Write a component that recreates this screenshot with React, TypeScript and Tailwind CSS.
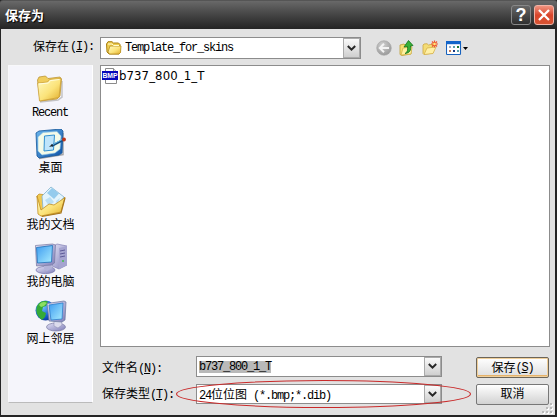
import React from "react";

const song = "font-['Liberation_Mono','Noto_Sans_CJK_SC',monospace]";

function Cn({ children }: { children: React.ReactNode }) {
  return <span className="font-['Noto_Sans_CJK_SC',sans-serif] text-[12px] tracking-normal">{children}</span>;
}

function Mono({ children }: { children: React.ReactNode }) {
  return <span className={`${song} whitespace-pre text-[12px] tracking-[-1.2px]`}>{children}</span>;
}

function Key({ k }: { k: string }) {
  return (
    <span className={`${song} whitespace-pre text-[12px] tracking-[-1.2px]`}>
      (<span className="underline underline-offset-1">{k}</span>)
    </span>
  );
}

function Defs() {
  return (
    <svg width="0" height="0" className="absolute">
      <defs>
        <linearGradient id="yellow" x1="0" y1="0" x2="1" y2="1">
          <stop offset="0" stopColor="#fffbc4" />
          <stop offset="0.55" stopColor="#fbe37a" />
          <stop offset="1" stopColor="#e0ab28" />
        </linearGradient>
        <linearGradient id="screen" x1="0" y1="0" x2="1" y2="1">
          <stop offset="0" stopColor="#3d9bf0" />
          <stop offset="1" stopColor="#a9edff" />
        </linearGradient>
        <linearGradient id="blue" x1="0" y1="0" x2="1" y2="1">
          <stop offset="0" stopColor="#6db8ee" />
          <stop offset="1" stopColor="#0b4fa5" />
        </linearGradient>
        <linearGradient id="lilac" x1="0" y1="0" x2="1" y2="1">
          <stop offset="0" stopColor="#e3e2f6" />
          <stop offset="1" stopColor="#7e7db8" />
        </linearGradient>
        <radialGradient id="globe" cx="0.35" cy="0.3" r="0.8">
          <stop offset="0" stopColor="#79c9ff" />
          <stop offset="0.6" stopColor="#1a63d6" />
          <stop offset="1" stopColor="#092f8c" />
        </radialGradient>
        <radialGradient id="grey" cx="0.4" cy="0.3" r="0.8">
          <stop offset="0" stopColor="#d0d0d0" />
          <stop offset="1" stopColor="#949494" />
        </radialGradient>
      </defs>
    </svg>
  );
}

function RecentIcon() {
  return (
    <svg width="32" height="32" viewBox="1 0 32 32">
      <path d="M6 30l18-2 4-3V9" fill="none" stroke="#777" strokeWidth="1.5" opacity="0.4" />
      <path d="M3.5 8l1.5-3 6.5-1 2.5 2.5 12-1.5 1.5 2-1.5 17-3 3-17 2z" fill="#f0cd5c" stroke="#b58b28" strokeWidth="0.7" />
      <path d="M3.5 11l10-1 2-2.5 11.5-1-2 19-19.5 3.5z" fill="url(#yellow)" stroke="#c89b33" strokeWidth="0.7" />
      <path d="M5 12l9.5-1 2-2.5 9-1" fill="none" stroke="#fffde0" />
    </svg>
  );
}

function DesktopIcon() {
  return (
    <svg width="32" height="32" viewBox="0 0 32 32">
      <path d="M4 29.5l24-4V4" fill="none" stroke="#555" opacity="0.5" strokeWidth="1.5" />
      <path d="M1 4l3-2 22-2 2 2-1 22-3 2-20 3-2-2z" fill="url(#blue)" stroke="#14579b" strokeWidth="0.8" />
      <path d="M3 8l5-4.5 14-1 4 4.5-1 13-5 4-13 2-4-4z" fill="#f4fbe9" stroke="#8fc4e6" strokeWidth="0.6" />
      <path d="M9.5 7l10-1-1 15-9.5 1z" fill="#bfe5fb" stroke="#3390d0" />
      <path d="M16.5 17l11.5-6" stroke="#155083" strokeWidth="2.4" />
      <path d="M18 15.5l9-5" stroke="#65b9e9" strokeWidth="1" />
      <path d="M14 18l3-3 1 2z" fill="#222" />
      <circle cx="29" cy="10.5" r="1.9" fill="#bd351a" />
    </svg>
  );
}

function DocsIcon() {
  return (
    <svg width="32" height="32" viewBox="0 0 32 32">
      <path d="M2 10l2-2 7 1 14 2v16l-19 3z" fill="#f1c84f" stroke="#bd8d23" strokeWidth="0.7" />
      <path d="M7 10l9-9 13 10-12 15-9-3z" fill="#e4f4fc" stroke="#82b2ce" strokeWidth="0.8" />
      <path d="M12 7l5-5 7 5.5-5 5.5z" fill="#94cbed" />
      <path d="M10 14l5-3 4 5-5 4zM21 15l4-3-3 7z" fill="#b9dff4" />
      <path d="M2 10l4 14 8-6 5 1 9-6 2-2-4 15-20 4-3-2z" fill="url(#yellow)" stroke="#c18f23" strokeWidth="0.8" />
      <path d="M7 30.5l19-3.5 4-15" fill="none" stroke="#a8781f" strokeWidth="1.2" />
    </svg>
  );
}

function ComputerIcon() {
  return (
    <svg width="32" height="32" viewBox="0 0 32 32">
      <path d="M17 4l5-3 10 2v19l-8 4-7-3z" fill="url(#lilac)" stroke="#8582b6" strokeWidth="0.7" />
      <path d="M24 5l8-2v19l-8 4z" fill="#a5a4d0" />
      <path d="M25 8l5-1M25 11l5-1M25 14l5-1" stroke="#5d5a98" strokeWidth="1" />
      <circle cx="28" cy="18" r="1" fill="#43c04a" />
      <ellipse cx="10.5" cy="27" rx="9.5" ry="3.6" fill="url(#lilac)" stroke="#706fa7" strokeWidth="0.7" />
      <path d="M9 20l7-1 1 6-5 3-3-2z" fill="#b3b3d8" />
      <path d="M.5 2.5l17-1.5 3 1-1 18-3 2-15 1z" fill="url(#lilac)" stroke="#77779f" strokeWidth="0.7" />
      <path d="M1.5 4.5l16-2-1 16.5-14 1z" fill="url(#screen)" stroke="#1d72b9" strokeWidth="0.8" />
    </svg>
  );
}

function NetworkIcon() {
  return (
    <svg width="32" height="32" viewBox="0 0 32 32">
      <circle cx="10.5" cy="10.5" r="10" fill="url(#globe)" />
      <path d="M2 6c2-4 6-6 11-4.5l-2 4.5-3 1-1 4 4 2-1 4-3 3c-4-3-7-7-5-14z" fill="#35aa37" />
      <path d="M4 5c3-4 6-3 8-2l-3 3-3 1z" fill="#8bdf62" />
      <ellipse cx="21" cy="27" rx="9.5" ry="4" fill="url(#lilac)" stroke="#7778a0" strokeWidth="0.7" />
      <path d="M19 19l7-1 1 7-4 3-4-2z" fill="#dcdced" stroke="#8989ae" strokeWidth="0.5" />
      <path d="M12 3.5l17-2.5 2 1-1 18-3 2-13-1z" fill="url(#lilac)" stroke="#67779d" strokeWidth="0.7" />
      <path d="M14 5l14-2-1 16-11 1z" fill="url(#screen)" stroke="#2b82ce" strokeWidth="0.8" />
    </svg>
  );
}

function SmallFolder() {
  return (
    <svg width="16" height="14" viewBox="0 0 16 14">
      <path d="M.5 3L2 .7h4L7.5 2h5L14 3.5V12l-1 1H3L1 11z" fill="#edcc4e" stroke="#a98016" />
      <path d="M4 5h11l-.5 6.5L13 13H3.5L2 11z" fill="url(#yellow)" stroke="#ba9021" strokeWidth="0.8" />
      <path d="M2 3h4l1.5 1.5H13" stroke="#fffbcf" fill="none" />
    </svg>
  );
}

function BmpIcon() {
  return (
    <svg width="16" height="16" viewBox="0 0 16 16" className="shrink-0">
      <path d="M3.5.5h8l3 3v12h-11z" fill="#fff" stroke="#8b8b8b" />
      <path d="M11.5.5v3h3" fill="#ddd" stroke="#8b8b8b" />
      <rect y="3" width="16" height="9" fill="#0808bb" />
      <text x="8" y="10" textAnchor="middle" fontFamily="Liberation Sans" fontWeight="bold" fontSize="6.8" fill="#fff">
        BMP
      </text>
    </svg>
  );
}

function BackIcon() {
  return (
    <svg width="16" height="16" viewBox="0 0 16 16">
      <circle cx="8" cy="8" r="7.3" fill="url(#grey)" stroke="#a5a5a5" strokeWidth="0.6" />
      <path d="M13 8H4M8 3.8L3.8 8 8 12.2" fill="none" stroke="#f3f3f3" strokeWidth="2" />
    </svg>
  );
}

function UpIcon() {
  return (
    <svg width="16" height="16" viewBox="0 0 16 16">
      <path d="M1 5l4-1 1 1 6-1v10l-9 1.5-2-1z" fill="#f6df72" stroke="#bea035" strokeWidth="0.8" />
      <path d="M2 15l2-7 9-1-1 7z" fill="#fff1a1" stroke="#cfad42" strokeWidth="0.7" />
      <path d="M6 13.5c2.8-1.5 2.8-3.5 2.5-7L5 7l4.5-6.5L14 5.5l-2.5.5c.7 4-.7 7-5.5 7.5z" fill="#37b138" stroke="#137119" strokeWidth="0.8" />
    </svg>
  );
}

function NewFolderIcon() {
  return (
    <svg width="16" height="16" viewBox="0 0 16 16">
      <path d="M1 5l1-1 3-.3L6.5 5 11 4v9l-9 1.5-1-1z" fill="#f3dc75" stroke="#cda641" strokeWidth="0.8" />
      <path d="M2 14.5l3-6.5 9-1-3 6.5z" fill="#fff0a6" stroke="#d6b14b" strokeWidth="0.8" />
      <path d="M12.5.5v7M9 4h7M10 1.5l5 5M15 1.5l-5 5" stroke="#f0582b" strokeWidth="1.2" />
      <circle cx="12.5" cy="4" r="1.3" fill="#ffe87c" />
    </svg>
  );
}

function ViewIcon() {
  return (
    <svg width="23" height="16" viewBox="0 0 23 16">
      <rect x="0.5" y="1.5" width="14" height="13" rx="0.7" fill="#fff" stroke="#1762bd" strokeWidth="1.1" />
      <path d="M0 1h15v3.2H0z" fill="#1265ca" />
      <path d="M3 6h2v2H3z" fill="#9aabc6" />
      <path d="M7 6h2v2H7zM11 10h2v2h-2z" fill="#5aa0ae" />
      <path d="M11 6h2v2h-2z" fill="#217c31" />
      <path d="M3 10h2v2H3z" fill="#c57a55" />
      <path d="M7 10h2v2H7z" fill="#173982" />
      <path d="M17 7h5l-2.5 3z" fill="#000" />
    </svg>
  );
}

function DropButton() {
  return (
    <div className="flex h-full w-[17px] shrink-0 items-center justify-center border border-[#aaa] bg-gradient-to-b from-[#fafafa] to-[#cfcfcf]">
      <svg width="9" height="7" viewBox="0 0 9 7">
        <path d="M.8 1l3.7 3.7L8.2 1" fill="none" stroke="#272727" strokeWidth="2" />
      </svg>
    </div>
  );
}

function Combo({ children, size }: { children: React.ReactNode; size: string }) {
  return (
    <div className={`flex items-center border border-[#8c8c8c] bg-white ${size}`}>
      <div className="flex grow items-center whitespace-nowrap leading-[14px]">{children}</div>
      <DropButton />
    </div>
  );
}

function Place({ icon, children }: { icon: React.ReactNode; children: React.ReactNode }) {
  return (
    <div className="flex h-[57px] flex-col items-center">
      {icon}
      <div className="-mt-px flex h-[14px] whitespace-nowrap leading-[14px]">{children}</div>
    </div>
  );
}

export default function App() {
  return (
    <div className="relative flex h-[417px] w-[557px] flex-col overflow-hidden bg-[#252525] text-black">
      <Defs />
      <header className="flex h-[29px] shrink-0 items-center rounded-t-[3px] border-t border-[#555] bg-gradient-to-b from-[#696969] via-[#444] to-[#242424] pl-[5px] pr-[3px]">
        <h1 className="grow font-['Noto_Sans_CJK_SC',sans-serif] text-[13px] font-bold leading-[14px] text-white [text-shadow:1px_1px_1px_#000]">
          保存为
        </h1>
        <div className="flex gap-[3px]">
          <div className="flex h-[20px] w-[20px] items-center justify-center rounded-[3px] border border-[#888] bg-gradient-to-b from-[#666] to-[#303030] font-['Liberation_Sans',sans-serif] text-[18px] font-bold leading-none text-white">
            ?
          </div>
          <div className="flex h-[20px] w-[20px] items-center justify-center rounded-[3px] border border-[#f1b2a5] bg-gradient-to-b from-[#ee927f] via-[#d9452b] to-[#d75433]">
            <svg width="12" height="12" viewBox="0 0 12 12">
              <path d="M1 1l10 10M11 1L1 11" stroke="#fff" strokeWidth="2.3" />
            </svg>
          </div>
        </div>
      </header>

      <main className="mb-[2px] ml-px mr-[2px] flex grow flex-col bg-[#e2e2e2] pl-[7px]">
        <div className="flex h-[36px] shrink-0 pt-[8px]">
          <div className="flex h-[22px] w-[92px] items-center whitespace-nowrap pb-[5px] pl-[25px] leading-[14px]">
            <Cn>保存在</Cn>
            <div className="-mt-px ml-px"><Key k="I" /><Mono>:</Mono></div>
          </div>
          <Combo size="h-[22px] w-[261px]">
            <div className="flex items-center gap-[3px] pl-[5px]">
              <SmallFolder />
              <Mono>Template_for_skins</Mono>
            </div>
          </Combo>
          <div className="flex h-[22px] items-center pl-[15px]">
            <BackIcon />
            <div className="ml-[7px]"><UpIcon /></div>
            <div className="ml-[7px]"><NewFolderIcon /></div>
            <div className="ml-[8px]"><ViewIcon /></div>
          </div>
        </div>

        <div className="flex grow">
          <nav className="h-[338px] w-[85px] shrink-0 border border-[#f8f8fa] border-b-[#bbb] border-r-[#fff] bg-[#f5f5fb] pt-[6px]">
            <Place icon={<RecentIcon />}><div className="-ml-px"><Mono>Recent</Mono></div></Place>
            <Place icon={<DesktopIcon />}><Cn>桌面</Cn></Place>
            <Place icon={<DocsIcon />}><Cn>我的文档</Cn></Place>
            <Place icon={<ComputerIcon />}><Cn>我的电脑</Cn></Place>
            <Place icon={<NetworkIcon />}><Cn>网上邻居</Cn></Place>
          </nav>

          <div className="ml-[7px] flex w-[450px] flex-col">
            <div className="h-[282px] border border-[#8c8c8c] bg-white pl-[1px] pt-[2px]">
              <div className="flex items-center gap-px font-['DejaVu_Sans_Condensed','DejaVu_Sans',sans-serif] text-[13px] leading-[16px]">
                <BmpIcon />
                <span className="tracking-[0.1px]">b737_800_1_T</span>
              </div>
            </div>

            <div className="mt-[9px] flex h-[22px]">
              <div className="flex w-[96px] whitespace-nowrap pl-[2px] pt-[4px] leading-[14px]">
                <Cn>文件名</Cn>
                <div className="-mt-px"><Key k="N" /><Mono>:</Mono></div>
              </div>
              <Combo size="h-[21px] w-[246px]">
                <span className="ml-[2px] flex h-[12px] items-center bg-[#b9b9b9]"><Mono>b737_800_1_T</Mono></span>
              </Combo>
              <button className="ml-[34px] mt-px flex h-[21px] w-[73px] items-center justify-center whitespace-nowrap rounded-[2px] border border-[#6c6559] bg-gradient-to-b from-[#fff] to-[#dedede] pb-[2px] leading-[14px] shadow-[inset_0_0_0_1px_#f0cf9a,inset_0_-2px_0_0_#e5b26a]">
                <Cn>保存</Cn><div className="-mt-px"><Key k="S" /></div>
              </button>
            </div>
            <div className="mt-[6px] flex h-[22px]">
              <div className="flex w-[96px] whitespace-nowrap pl-[2px] pt-[2px] leading-[14px]">
                <Cn>保存类型</Cn>
                <div className="-mt-px"><Key k="T" /><Mono>:</Mono></div>
              </div>
              <Combo size="h-[20px] w-[246px]">
                <span className="pl-[2px]"><Mono>24</Mono><Cn>位位图</Cn><Mono>{" (*.bmp;*.dib)"}</Mono></span>
              </Combo>
              <button className="ml-[34px] flex h-[21px] w-[73px] items-center justify-center rounded-[2px] border border-[#777] bg-gradient-to-b from-[#fff] to-[#d2d2d2] pb-[3px] leading-[14px]">
                <Cn>取消</Cn>
              </button>
            </div>
          </div>
        </div>
      </main>

      <svg width="298" height="32" viewBox="0 0 298 32" className="absolute left-[175px] top-[378px]">
        <ellipse cx="148.5" cy="16" rx="147" ry="13.5" fill="none" stroke="#c92a2a" strokeWidth="1.1" />
      </svg>
      <svg width="12" height="12" viewBox="0 0 12 12" className="absolute bottom-[2px] right-[3px]">
        <path d="M8 0h2v2H8zM4 4h2v2H4zM8 4h2v2H8zM0 8h2v2H0zM4 8h2v2H4zM8 8h2v2H8z" fill="#bbb" />
        <path d="M10 1h1v2H9V2h1zM6 5h1v2H5V6h1zM10 5h1v2H9V6h1zM2 9h1v2H1v-1h1zM6 9h1v2H5v-1h1zM10 9h1v2H9v-1h1z" fill="#fff" />
      </svg>
    </div>
  );
}
